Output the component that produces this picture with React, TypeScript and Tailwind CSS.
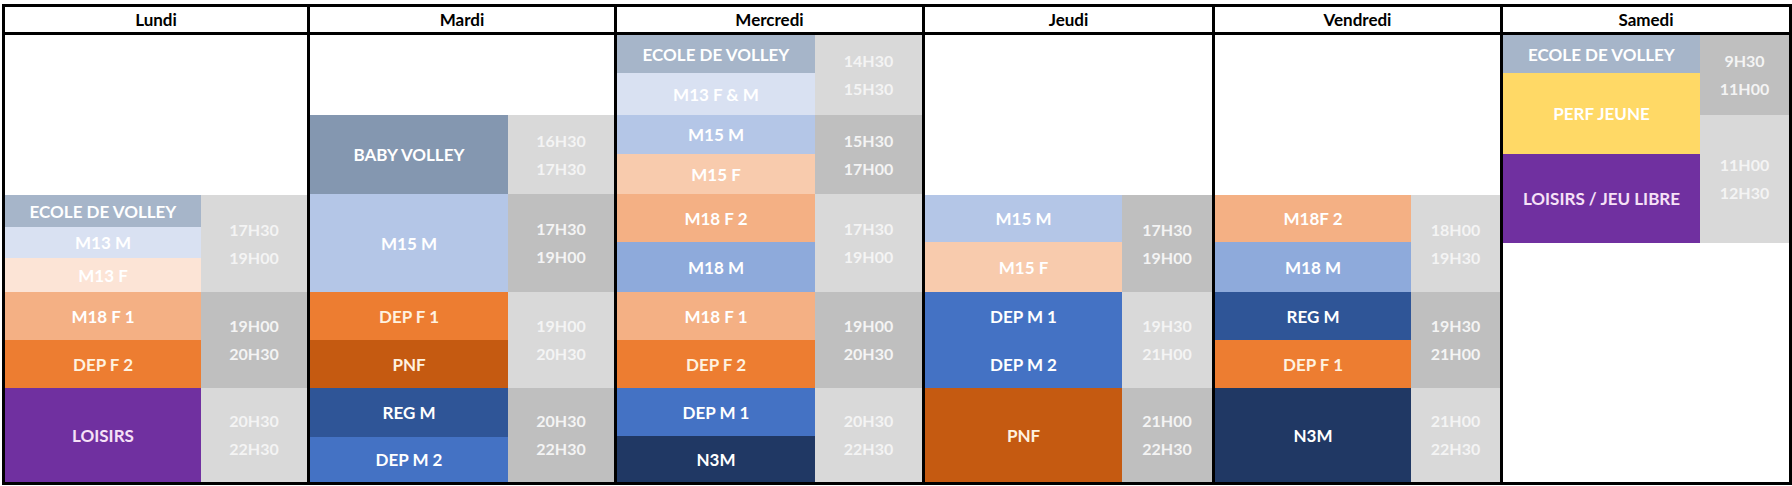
type Slot = { label?: string; h: string; bg: string; text?: string };
type TimeSlot = { times?: [string, string]; h: string; bg: string };
type Day = {
  name: string;
  width: string;
  actWidth: string;
  last?: boolean;
  slots: Slot[];
  times: TimeSlot[];
};

const LIGHT = 'bg-[#d9d9d9]';
const DARK = 'bg-[#bfbfbf]';
const BLANK = 'bg-white';

const days: Day[] = [
  {
    name: 'Lundi',
    width: 'w-[305px]',
    actWidth: 'w-[196px]',
    slots: [
      { h: 'h-[160px]', bg: BLANK },
      { label: 'ECOLE DE VOLLEY', h: 'h-[32px]', bg: 'bg-[#a6b5c9]' },
      { label: 'M13 M', h: 'h-[31px]', bg: 'bg-[#d9e1f2]' },
      { label: 'M13 F', h: 'h-[34px]', bg: 'bg-[#fce4d6]' },
      { label: 'M18 F 1', h: 'h-[48px]', bg: 'bg-[#f4b084]' },
      { label: 'DEP F 2', h: 'h-[48px]', bg: 'bg-[#ed7d31]', text: 'text-[#fff2e0]' },
      { label: 'LOISIRS', h: 'h-[94px]', bg: 'bg-[#7030a0]', text: 'text-[#f6e1f7]' },
    ],
    times: [
      { h: 'h-[160px]', bg: BLANK },
      { times: ['17H30', '19H00'], h: 'h-[97px]', bg: LIGHT },
      { times: ['19H00', '20H30'], h: 'h-[96px]', bg: DARK },
      { times: ['20H30', '22H30'], h: 'h-[94px]', bg: LIGHT },
    ],
  },
  {
    name: 'Mardi',
    width: 'w-[307px]',
    actWidth: 'w-[198px]',
    slots: [
      { h: 'h-[80px]', bg: BLANK },
      { label: 'BABY VOLLEY', h: 'h-[79px]', bg: 'bg-[#8497b0]' },
      { label: 'M15 M', h: 'h-[98px]', bg: 'bg-[#b4c6e7]' },
      { label: 'DEP F 1', h: 'h-[48px]', bg: 'bg-[#ed7d31]', text: 'text-[#fff2e0]' },
      { label: 'PNF', h: 'h-[48px]', bg: 'bg-[#c55a11]', text: 'text-[#fff2e0]' },
      { label: 'REG M', h: 'h-[49px]', bg: 'bg-[#2f5597]' },
      { label: 'DEP M 2', h: 'h-[45px]', bg: 'bg-[#4472c4]' },
    ],
    times: [
      { h: 'h-[80px]', bg: BLANK },
      { times: ['16H30', '17H30'], h: 'h-[79px]', bg: LIGHT },
      { times: ['17H30', '19H00'], h: 'h-[98px]', bg: DARK },
      { times: ['19H00', '20H30'], h: 'h-[96px]', bg: LIGHT },
      { times: ['20H30', '22H30'], h: 'h-[94px]', bg: DARK },
    ],
  },
  {
    name: 'Mercredi',
    width: 'w-[308px]',
    actWidth: 'w-[198px]',
    slots: [
      { label: 'ECOLE DE VOLLEY', h: 'h-[38px]', bg: 'bg-[#a6b5c9]' },
      { label: 'M13 F & M', h: 'h-[42px]', bg: 'bg-[#d9e1f2]' },
      { label: 'M15 M', h: 'h-[39px]', bg: 'bg-[#b4c6e7]' },
      { label: 'M15 F', h: 'h-[40px]', bg: 'bg-[#f8cbad]' },
      { label: 'M18 F 2', h: 'h-[48px]', bg: 'bg-[#f4b084]' },
      { label: 'M18 M', h: 'h-[50px]', bg: 'bg-[#8eaadb]' },
      { label: 'M18 F 1', h: 'h-[48px]', bg: 'bg-[#f4b084]' },
      { label: 'DEP F 2', h: 'h-[48px]', bg: 'bg-[#ed7d31]', text: 'text-[#fff2e0]' },
      { label: 'DEP M 1', h: 'h-[48px]', bg: 'bg-[#4472c4]' },
      { label: 'N3M', h: 'h-[46px]', bg: 'bg-[#203864]' },
    ],
    times: [
      { times: ['14H30', '15H30'], h: 'h-[80px]', bg: LIGHT },
      { times: ['15H30', '17H00'], h: 'h-[79px]', bg: DARK },
      { times: ['17H30', '19H00'], h: 'h-[98px]', bg: LIGHT },
      { times: ['19H00', '20H30'], h: 'h-[96px]', bg: DARK },
      { times: ['20H30', '22H30'], h: 'h-[94px]', bg: LIGHT },
    ],
  },
  {
    name: 'Jeudi',
    width: 'w-[290px]',
    actWidth: 'w-[197px]',
    slots: [
      { h: 'h-[160px]', bg: BLANK },
      { label: 'M15 M', h: 'h-[47px]', bg: 'bg-[#b4c6e7]' },
      { label: 'M15 F', h: 'h-[50px]', bg: 'bg-[#f8cbad]' },
      { label: 'DEP M 1', h: 'h-[48px]', bg: 'bg-[#4472c4]' },
      { label: 'DEP M 2', h: 'h-[48px]', bg: 'bg-[#4472c4]' },
      { label: 'PNF', h: 'h-[94px]', bg: 'bg-[#c55a11]', text: 'text-[#fff2e0]' },
    ],
    times: [
      { h: 'h-[160px]', bg: BLANK },
      { times: ['17H30', '19H00'], h: 'h-[97px]', bg: DARK },
      { times: ['19H30', '21H00'], h: 'h-[96px]', bg: LIGHT },
      { times: ['21H00', '22H30'], h: 'h-[94px]', bg: DARK },
    ],
  },
  {
    name: 'Vendredi',
    width: 'w-[288px]',
    actWidth: 'w-[196px]',
    slots: [
      { h: 'h-[160px]', bg: BLANK },
      { label: 'M18F 2', h: 'h-[47px]', bg: 'bg-[#f4b084]' },
      { label: 'M18 M', h: 'h-[50px]', bg: 'bg-[#8eaadb]' },
      { label: 'REG M', h: 'h-[48px]', bg: 'bg-[#2f5597]' },
      { label: 'DEP F 1', h: 'h-[48px]', bg: 'bg-[#ed7d31]', text: 'text-[#fff2e0]' },
      { label: 'N3M', h: 'h-[94px]', bg: 'bg-[#203864]' },
    ],
    times: [
      { h: 'h-[160px]', bg: BLANK },
      { times: ['18H00', '19H30'], h: 'h-[97px]', bg: LIGHT },
      { times: ['19H30', '21H00'], h: 'h-[96px]', bg: DARK },
      { times: ['21H00', '22H30'], h: 'h-[94px]', bg: LIGHT },
    ],
  },
  {
    name: 'Samedi',
    width: 'w-[286px]',
    actWidth: 'w-[197px]',
    last: true,
    slots: [
      { label: 'ECOLE DE VOLLEY', h: 'h-[38px]', bg: 'bg-[#a6b5c9]' },
      { label: 'PERF JEUNE', h: 'h-[81px]', bg: 'bg-[#ffd966]' },
      { label: 'LOISIRS / JEU LIBRE', h: 'h-[89px]', bg: 'bg-[#7030a0]', text: 'text-[#f6e1f7]' },
      { h: 'h-[239px]', bg: BLANK },
    ],
    times: [
      { times: ['9H30', '11H00'], h: 'h-[80px]', bg: DARK },
      { times: ['11H00', '12H30'], h: 'h-[128px]', bg: LIGHT },
      { h: 'h-[239px]', bg: BLANK },
    ],
  },
];

const DayColumn = ({ day }: { day: Day }) => (
  <div className={`${day.width} shrink-0 ${day.last ? '' : 'border-r-[3px] border-black'}`}>
    {/* Day header */}
    <div className="h-[28px] border-b-[3px] border-black flex items-center justify-center text-[17px] font-bold text-black leading-none">
      {day.name}
    </div>

    {/* Slots */}
    <div className="h-[447px] flex">
      <div className={`${day.actWidth} shrink-0 flex flex-col`}>
        {day.slots.map((s, i) => (
          <div
            key={i}
            className={`${s.h} ${s.bg} shrink-0 flex items-center justify-center text-[17px] font-bold leading-none whitespace-nowrap ${s.text ?? 'text-white'}`}
          >
            {s.label}
          </div>
        ))}
      </div>
      <div className="flex-1 flex flex-col">
        {day.times.map((t, i) => (
          <div
            key={i}
            className={`${t.h} ${t.bg} shrink-0 flex flex-col items-center justify-center text-[16px] font-bold leading-[28px] text-[#f4f4f4]`}
          >
            {t.times && (
              <>
                <span>{t.times[0]}</span>
                <span>{t.times[1]}</span>
              </>
            )}
          </div>
        ))}
      </div>
    </div>
  </div>
);

const App = () => {
  return (
    <div className="w-[1792px] h-[486px] bg-white pt-[4px] pl-[2px] font-['Lato',sans-serif]">
      <div className="w-[1790px] border-[3px] border-black flex">
        {days.map(day => (
          <DayColumn key={day.name} day={day} />
        ))}
      </div>
    </div>
  );
};

export default App;
